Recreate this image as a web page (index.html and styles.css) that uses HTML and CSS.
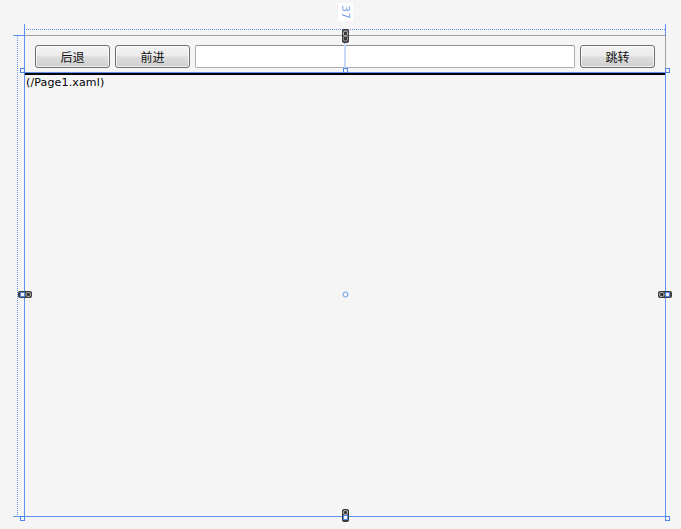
FILE: index.html
```html
<!DOCTYPE html>
<html lang="zh-CN">
<head>
<meta charset="utf-8">
<title>Frame 导航</title>
<link rel="stylesheet" href="styles.css">
</head>
<body>
<div class="stage">
  <div class="window">
    <div class="toolbar">
      <button class="btn">后退</button>
      <button class="btn">前进</button>
      <div class="address"></div>
      <button class="btn">跳转</button>
    </div>
    <div class="frame"><span class="frame-source">(/Page1.xaml)</span></div>
  </div>
  <svg class="adorners" width="681" height="529" viewBox="0 0 681 529">
    <!-- dotted margin guides -->
    <line class="dot" x1="24" y1="29.5" x2="666" y2="29.5"/>
    <line class="dot" x1="17.5" y1="36" x2="17.5" y2="516"/>
    <!-- window extension lines -->
    <line class="sel" x1="24.5" y1="24" x2="24.5" y2="517"/>
    <line class="sel" x1="13" y1="35.5" x2="24" y2="35.5"/>
    <line class="sel" x1="665.5" y1="24" x2="665.5" y2="36"/>
    <!-- frame selection -->
    <line class="sel" x1="24" y1="72.5" x2="666" y2="72.5"/>
    <line class="sel" x1="665.5" y1="72" x2="665.5" y2="517"/>
    <line class="sel" x1="13" y1="516.5" x2="666" y2="516.5"/>
    <!-- anchor line to top -->
    <line class="anchor" x1="345" y1="37" x2="345" y2="69"/>
    <!-- ruler label -->
    <rect x="338" y="3" width="15" height="18" fill="#ffffff"/>
    <text class="ruler" transform="translate(345.5 12) rotate(90)" text-anchor="middle" dominant-baseline="central">37</text>
    <!-- top anchor handle -->
    <g>
      <rect x="342" y="29" width="7" height="14" rx="2" fill="#3b3b3b"/>
      <rect x="343.5" y="31" width="4" height="5" rx="1.5" fill="none" stroke="#c8c8c8" stroke-width="1"/>
      <rect x="343.5" y="36" width="4" height="5" rx="1.5" fill="none" stroke="#9a9a9a" stroke-width="1"/>
    </g>
    <!-- left handle -->
    <g>
      <rect x="18" y="291" width="14" height="7" rx="2" fill="#3b3b3b"/>
      <rect x="26" y="292.5" width="4.5" height="4" rx="1.5" fill="none" stroke="#b0b0b0"/>
      <rect class="sq" x="20.5" y="292.5" width="4" height="4"/>
    </g>
    <!-- right handle -->
    <g>
      <rect x="658" y="291" width="14" height="7" rx="2" fill="#3b3b3b"/>
      <rect x="659.5" y="292.5" width="4.5" height="4" rx="1.5" fill="none" stroke="#b0b0b0"/>
      <rect class="sq" x="665.5" y="292.5" width="4" height="4"/>
    </g>
    <!-- bottom handle -->
    <g>
      <rect x="342" y="509" width="7" height="13" rx="2" fill="#3b3b3b"/>
      <rect x="343.5" y="510.5" width="4" height="4" rx="1.5" fill="none" stroke="#b0b0b0"/>
      <rect class="sq" x="343.5" y="515.5" width="4" height="4"/>
    </g>
    <!-- corner / edge squares -->
    <rect class="sq" x="20.5" y="68.5" width="4" height="4"/>
    <rect class="sq" x="665.5" y="68.5" width="4" height="4"/>
    <rect class="sq" x="343.5" y="68.5" width="4" height="4"/>
    <rect class="sq" x="20.5" y="516.5" width="4" height="4"/>
    <rect class="sq" x="665.5" y="516.5" width="4" height="4"/>
    <!-- center -->
    <circle cx="345.5" cy="294.5" r="2.5" fill="none" stroke="#6495ed" stroke-width="1"/>
  </svg>
</div>
</body>
</html>
```

FILE: styles.css
```css
html, body {
  margin: 0;
  padding: 0;
  background: #f5f5f5;
}

.stage {
  position: relative;
  width: 681px;
  height: 529px;
  box-sizing: border-box;
  padding: 35px 0 0 24px;
  overflow: hidden;
}

.window {
  width: 642px;
  height: 482px;
  box-sizing: border-box;
  border-top: 1px solid #a0a0a0;
  border-left: 1px solid #a0a0a0;
  border-right: 1px solid #a0a0a0;
  display: flex;
  flex-direction: column;
  background: #f5f5f5;
}

.toolbar {
  height: 37px;
  flex: none;
  box-sizing: border-box;
  padding: 9px 10px 0 10px;
  display: flex;
  gap: 5px;
  align-items: flex-start;
}

.btn {
  width: 75px;
  height: 23px;
  flex: none;
  box-sizing: border-box;
  margin: 0;
  padding: 0;
  border: 1px solid #707070;
  border-radius: 3px;
  background: linear-gradient(#f3f3f3 0%, #ebebeb 48%, #dddddd 52%, #cfcfcf 100%);
  box-shadow: inset 0 0 0 1px rgba(255, 255, 255, 0.7);
  font-family: "Noto Sans CJK SC", "Noto Sans", sans-serif;
  font-size: 12px;
  line-height: 20px;
  color: #111;
}

.address {
  flex: 1;
  height: 23px;
  box-sizing: border-box;
  border: 1px solid #abadb3;
  border-top-color: #8e9196;
  border-radius: 2px;
  background: #ffffff;
}

.frame {
  flex: 1;
  border-top: 2px solid #000;
  padding: 1px 0 0 1px;
  font-family: "DejaVu Sans", Verdana, sans-serif;
  font-size: 11px;
  line-height: 13px;
  letter-spacing: 0.15px;
  color: #000;
}

.frame-source {
  display: block;
}

.adorners {
  position: absolute;
  left: 0;
  top: 0;
  pointer-events: none;
}

.adorners .dot {
  stroke: #6495ed;
  stroke-width: 1;
  stroke-dasharray: 1 1;
  shape-rendering: crispEdges;
}

.adorners .sel {
  stroke: #5f91ee;
  stroke-width: 1;
  shape-rendering: crispEdges;
}

.adorners .anchor {
  stroke: #c8d9f5;
  stroke-width: 2;
  shape-rendering: crispEdges;
}

.adorners .sq {
  fill: #f5f5f5;
  stroke: #4f86ec;
  stroke-width: 1;
  shape-rendering: crispEdges;
}

.adorners .ruler {
  font-family: "DejaVu Sans", sans-serif;
  font-size: 11px;
  fill: #7a9fe2;
}
```
